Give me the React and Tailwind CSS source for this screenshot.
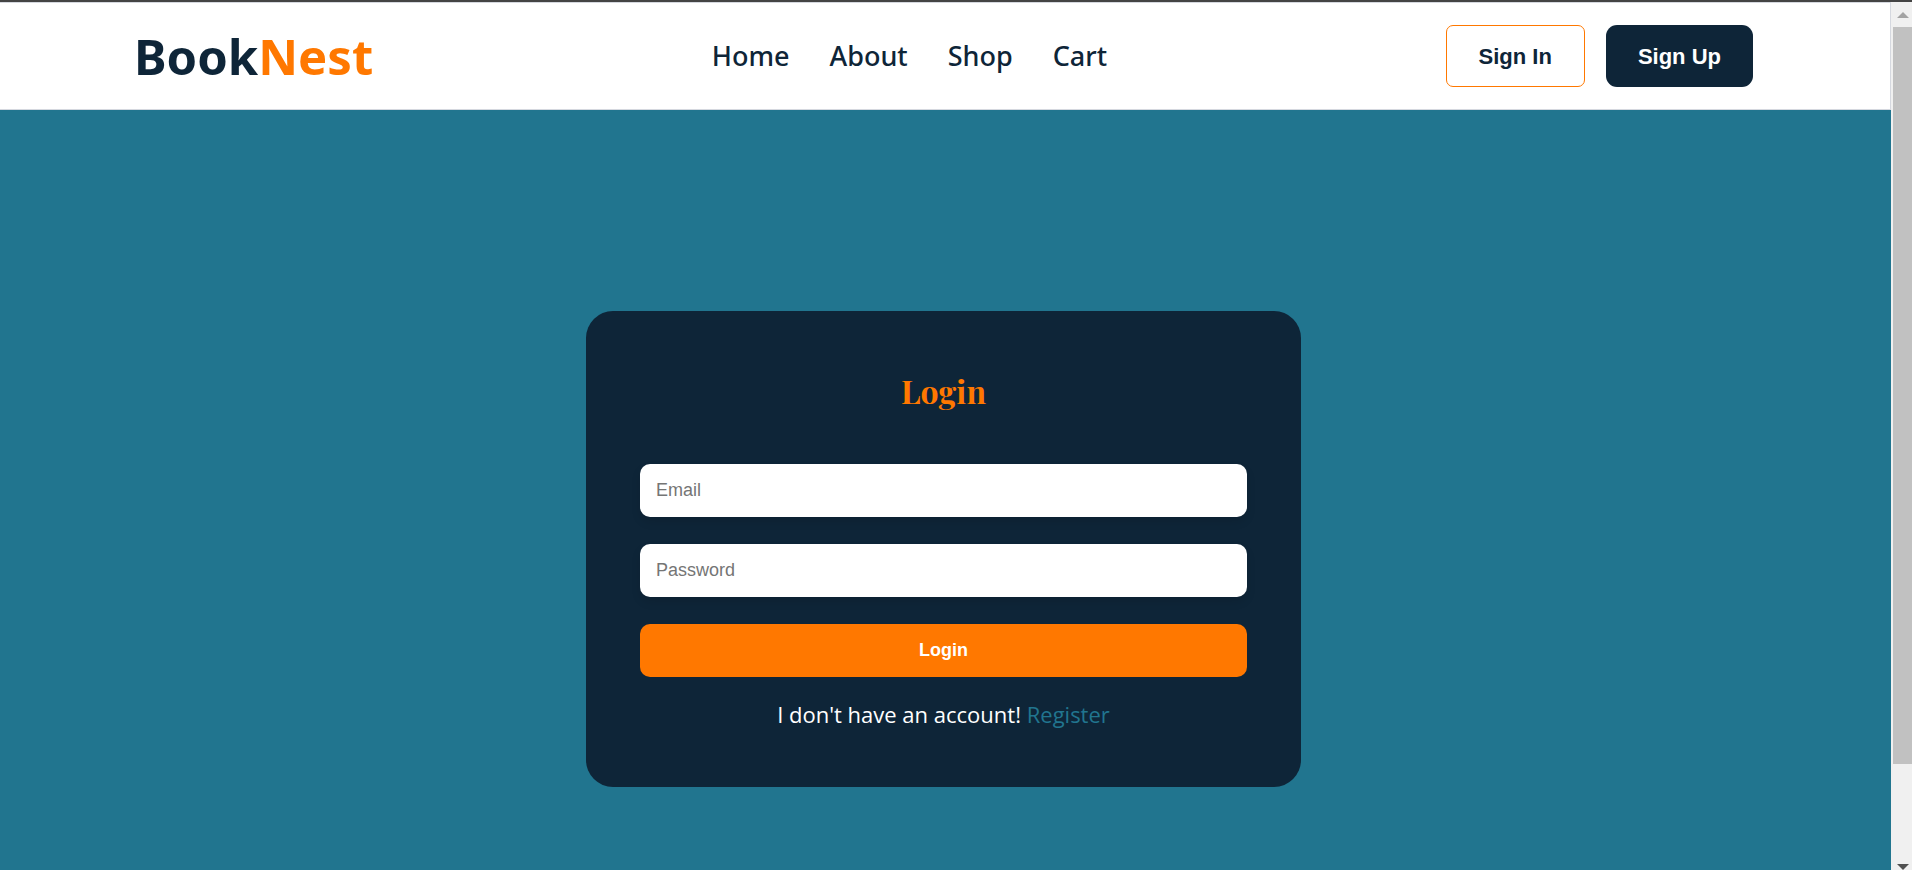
const links = ["Home", "About", "Shop", "Cart"];

function Header() {
  return (
    <header className="flex h-[108px] shrink-0 items-center justify-between border-y border-r border-[#d5d8df] bg-white pl-[134px] pr-[137px]">
      <a
        href="#home"
        className="font-['Noto_Sans',sans-serif] text-[49px] leading-[60px] font-bold text-[#0e2538]"
      >
        Book<span className="text-[#ff7800]">Nest</span>
      </a>
      <nav className="flex items-center gap-10">
        {links.map((label) => (
          <a
            key={label}
            href={`#${label.toLowerCase()}`}
            className="font-['Noto_Sans',sans-serif] text-[27px] leading-10 font-medium text-[#0e2538]"
          >
            {label}
          </a>
        ))}
      </nav>
      <div className="flex items-center gap-[21px] font-['Liberation_Sans',sans-serif] text-[22px] font-bold">
        <button
          type="button"
          className="h-[62px] rounded-[7px] border border-[#ff7800] px-8 text-[#0e2538]"
        >
          Sign In
        </button>
        <button
          type="button"
          className="h-[62px] rounded-[11px] bg-[#0e2538] px-8 text-white"
        >
          Sign Up
        </button>
      </div>
    </header>
  );
}

function Field({ type, label }) {
  return (
    <input
      type={type}
      aria-label={label}
      placeholder={label}
      className="h-[53px] w-full rounded-[10px] bg-white px-4 font-['Liberation_Sans',sans-serif] text-[18px] text-[#0e2538] shadow-[0_5px_10px_rgba(0,0,0,0.1)] outline-none placeholder:text-[#757575]"
    />
  );
}

function LoginCard() {
  return (
    <form className="flex w-full max-w-[715px] flex-col items-center rounded-[27px] bg-[#0e2538] px-[54px] pt-[56px] pb-[57px]">
      <h1 className="mb-[49px] font-['Playfair_Display','DM_Serif_Display','Liberation_Serif',serif] text-[32px] leading-[48px] font-bold text-[#ff7800]">
        Login
      </h1>
      <div className="flex w-full flex-col gap-[27px]">
        <Field type="email" label="Email" />
        <Field type="password" label="Password" />
        <button
          type="button"
          className="h-[53px] w-full rounded-[10px] bg-[#ff7800] font-['Liberation_Sans',sans-serif] text-[18px] font-bold text-white"
        >
          Login
        </button>
      </div>
      <p className="mt-[21px] font-['Open_Sans',sans-serif] text-[22px] leading-8 text-white">
        I don't have an account!{" "}
        <a href="#register" className="text-[#21758f]">
          Register
        </a>
      </p>
    </form>
  );
}

function ScrollBar() {
  return (
    <div
      aria-hidden="true"
      className="flex w-[21px] shrink-0 flex-col items-end bg-[#f0f0f0]"
    >
      <div className="flex h-[25px] w-[19px] items-center justify-center">
        <svg width="12" height="6" viewBox="0 0 12 6">
          <path d="M6 0 12 6H0z" fill="#a3a3a3" />
        </svg>
      </div>
      <div className="w-[19px] grow bg-[#c1c1c1]" />
      <div className="flex h-[106px] w-[19px] items-end justify-center">
        <svg width="12" height="6" viewBox="0 0 12 6">
          <path d="M0 0h12L6 6z" fill="#505050" />
        </svg>
      </div>
    </div>
  );
}

export default function App() {
  return (
    <div className="flex h-screen overflow-hidden border-t-2 border-[#444444]">
      <div className="flex min-w-0 grow flex-col bg-[#21758f]">
        <Header />
        <main className="flex grow items-start justify-center pt-[201px] pr-1">
          <LoginCard />
        </main>
      </div>
      <ScrollBar />
    </div>
  );
}
